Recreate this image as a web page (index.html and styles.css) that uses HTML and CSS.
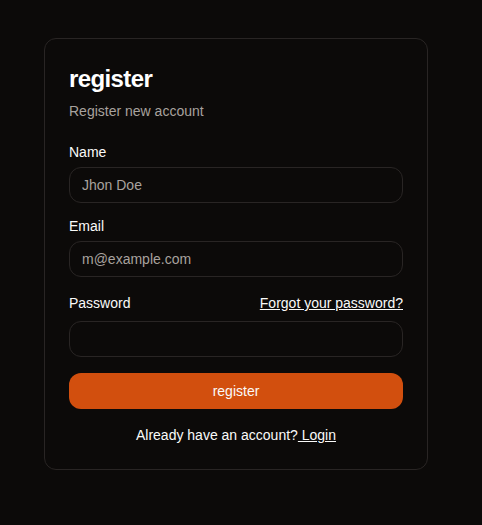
FILE: index.html
```html
<!DOCTYPE html>
<html lang="en">
<head>
<meta charset="utf-8">
<title>Register</title>
<link rel="stylesheet" href="styles.css">
</head>
<body>
<main class="page">
  <section class="card">
    <header class="card-header">
      <h1 class="title">register</h1>
      <p class="subtitle">Register new account</p>
    </header>
    <form class="form">
      <div class="field">
        <label class="label" for="name">Name</label>
        <input class="input" id="name" type="text" placeholder="Jhon Doe">
      </div>
      <div class="field">
        <label class="label" for="email">Email</label>
        <input class="input" id="email" type="email" placeholder="m@example.com">
      </div>
      <div class="field">
        <div class="label-row">
          <label class="label" for="password">Password</label>
          <a class="link" href="#">Forgot your password?</a>
        </div>
        <input class="input" id="password" type="password">
      </div>
      <button class="button" type="button">register</button>
      <p class="footer">Already have an account?<a class="link" href="#"> Login</a></p>
    </form>
  </section>
</main>
</body>
</html>
```

FILE: styles.css
```css
* { box-sizing: border-box; }
html, body {
  margin: 0;
  background: #0c0a09;
  color: #fafaf9;
  font-family: "Liberation Sans", Arial, sans-serif;
}
.page {
  padding: 38px 0 0 44px;
}
.card {
  width: 384px;
  border: 1px solid #292524;
  border-radius: 12px;
  padding: 24px;
  background: #0c0a09;
}
.card-header {
  display: flex;
  flex-direction: column;
  gap: 6px;
}
.title {
  margin: 0;
  font-size: 24px;
  line-height: 32px;
  font-weight: 700;
  letter-spacing: -0.6px;
  color: #ffffff;
}
.subtitle {
  margin: 0;
  font-size: 14px;
  line-height: 20px;
  color: #a8a29e;
}
.form {
  margin-top: 24px;
  display: flex;
  flex-direction: column;
  gap: 16px;
}
.field {
  display: flex;
  flex-direction: column;
  gap: 8px;
}
.label-row {
  display: flex;
  align-items: center;
  justify-content: space-between;
  height: 20px;
}
.label {
  font-size: 14px;
  line-height: 14px;
  font-weight: 500;
  color: #fafaf9;
}
.link {
  color: #fafaf9;
  font-size: 14px;
  line-height: 20px;
  text-decoration: underline;
}
.input {
  height: 36px;
  width: 100%;
  border: 1px solid #292524;
  border-radius: 12px;
  background: transparent;
  padding: 4px 12px;
  font-family: inherit;
  font-size: 14px;
  color: #fafaf9;
  outline: none;
}
.input::placeholder { color: #a8a29e; }
.button {
  height: 36px;
  width: 100%;
  border: none;
  border-radius: 12px;
  background: #d24f0e;
  color: #fafaf9;
  font-family: inherit;
  font-size: 14px;
  font-weight: 500;
  padding: 0;
}
.footer {
  margin: 0;
  text-align: center;
  font-size: 14px;
  line-height: 20px;
}
```
